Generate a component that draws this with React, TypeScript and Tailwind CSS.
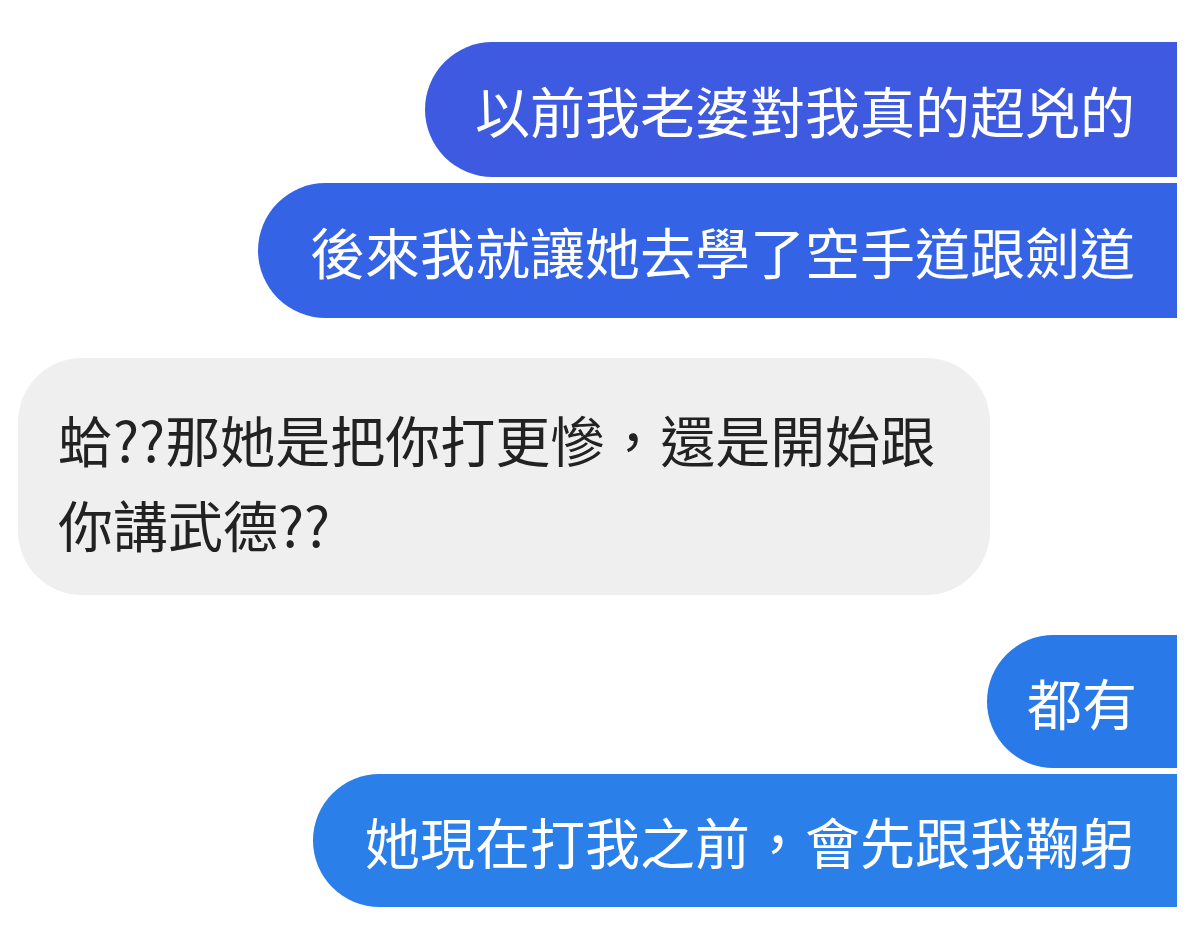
const font = { fontFamily: '"Noto Sans CJK TC", "Noto Sans", sans-serif' };

export default function App() {
  return (
    <div
      className="min-h-[925px] w-[1200px] bg-white pt-[42px] flex flex-col"
      style={font}
    >
      <div className="flex flex-col items-end gap-[6px] pr-[23px]">
        <div className="rounded-l-full rounded-tr-[52px] rounded-br-[10px] bg-[#3d5ae0] pl-[50px] pr-[42px] py-[40px] text-[55px] leading-[55px] text-white">
          以前我老婆對我真的超兇的
        </div>
        <div className="rounded-l-full rounded-tr-[10px] rounded-br-[52px] bg-[#3563e6] pl-[52px] pr-[42px] py-[40px] text-[55px] leading-[55px] text-white">
          後來我就讓她去學了空手道跟劍道
        </div>
      </div>

      <div className="mt-[40px] ml-[18px] self-start rounded-[64px] bg-[#efefef] pl-[40px] pr-[55px] pt-[38px] pb-[29px] text-[55px] leading-[85px] text-[#222]">
        蛤??那她是把你打更慘，還是開始跟
        <br />
        你講武德??
      </div>

      <div className="mt-[40px] flex flex-col items-end gap-[6px] pr-[23px]">
        <div className="rounded-l-full rounded-tr-[52px] rounded-br-[10px] bg-[#2a79e8] px-[40px] py-[39px] text-[55px] leading-[55px] text-white">
          都有
        </div>
        <div className="rounded-l-full rounded-tr-[10px] rounded-br-[52px] bg-[#2a7fe9] pl-[52px] pr-[42px] py-[39px] text-[55px] leading-[55px] text-white">
          她現在打我之前，會先跟我鞠躬
        </div>
      </div>
    </div>
  );
}
